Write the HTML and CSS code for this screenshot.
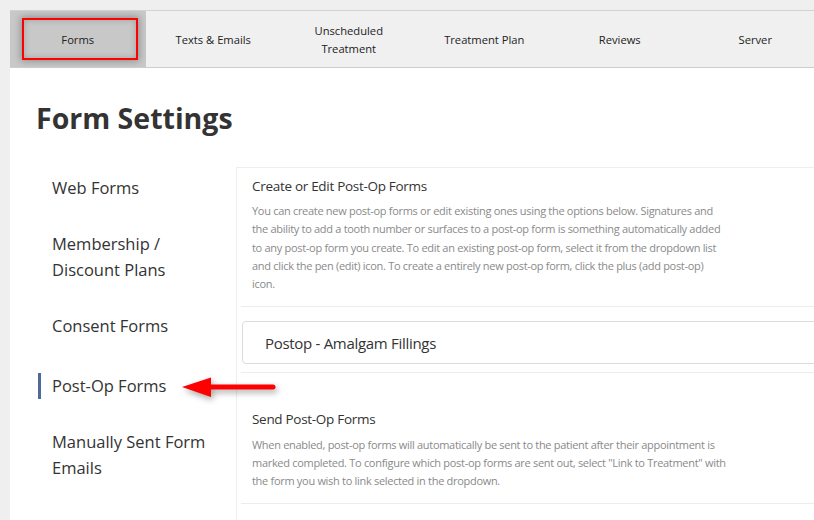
FILE: index.html
```html
<!DOCTYPE html>
<html lang="en">
<head>
<meta charset="UTF-8">
<meta name="viewport" content="width=device-width, initial-scale=1.0">
<title>Form Settings</title>
<link rel="stylesheet" href="styles.css">
</head>
<body>

<div class="page">
    <nav class="tabs">
        <div class="tab active">Forms</div>
        <div class="tab">Texts &amp; Emails</div>
        <div class="tab">Unscheduled<br>Treatment</div>
        <div class="tab">Treatment Plan</div>
        <div class="tab">Reviews</div>
        <div class="tab">Server</div>
    </nav>

    <div class="main">
        <h1>Form Settings</h1>

        <div class="layout">
            <ul class="side-nav">
                <li class="nav-item"><span class="label">Web Forms</span></li>
                <li class="nav-item"><span class="label">Membership /<br>Discount Plans</span></li>
                <li class="nav-item"><span class="label">Consent Forms</span></li>
                <li class="nav-item active"><span class="label">Post-Op Forms</span></li>
                <li class="nav-item"><span class="label">Manually Sent Form<br>Emails</span></li>
            </ul>

            <div class="panel">
                <section class="setting">
                    <h3>Create or Edit Post-Op Forms</h3>
                    <p>You can create new post-op forms or edit existing ones using the options below. Signatures and the ability to add a tooth number or surfaces to a post-op form is something automatically added to any post-op form you create. To edit an existing post-op form, select it from the dropdown list and click the pen (edit) icon. To create a entirely new post-op form, click the plus (add post-op) icon.</p>
                </section>
                <hr>
                <div class="select-box">Postop - Amalgam Fillings</div>
                <hr>
                <section class="setting second">
                    <h3>Send Post-Op Forms</h3>
                    <p>When enabled, post-op forms will automatically be sent to the patient after their appointment is marked completed. To configure which post-op forms are sent out, select "Link to Treatment" with the form you wish to link selected in the dropdown.</p>
                </section>
                <hr>
            </div>
        </div>
    </div>
</div>

<!-- callouts drawn over the page -->
<div class="callout-box"></div>
<svg class="callout-arrow" width="104" height="32" viewBox="0 0 104 32">
    <line x1="30" y1="15" x2="97" y2="15" stroke="#f00" stroke-width="5" stroke-linecap="round"/>
    <polygon points="6,15 35,5.5 35,25" fill="#f00"/>
</svg>

</body>
</html>
```

FILE: styles.css
```css
body {
    font-family: "Open Sans", "Noto Sans", sans-serif;
    background-color: #efefef;
    margin: 0;
    padding: 0;
    overflow: hidden;
    width: 814px;
    height: 520px;
}

.page {
    margin-left: 10px;
    padding-top: 10px;
    height: 510px;
    overflow: hidden;
}

.tabs {
    display: flex;
    background-color: #f0f0f0;
    border-top: 1px solid #d2d2d2;
    border-bottom: 1px solid #cdcdcd;
    height: 56px;
    width: 1000px;
}

.tab {
    flex: 0 0 135.5px;
    display: flex;
    align-items: center;
    justify-content: center;
    padding-top: 2px;
    box-sizing: border-box;
    text-align: center;
    font-size: 11.2px;
    line-height: 18px;
    color: #222;
}

.tab.active {
    background-color: #c8c8c8;
}

.main {
    background-color: #fff;
    height: 460px;
    width: 1000px;
}

h1 {
    margin: 0;
    padding: 30px 0 0 26px;
    font-size: 28.5px;
    line-height: 40px;
    font-weight: 700;
    color: #333;
}

.layout {
    display: grid;
    grid-template-columns: 226px 1fr;
    margin-top: 22px;
}

.side-nav {
    list-style: none;
    margin: 0;
    padding: 0 0 0 42px;
}

.nav-item {
    padding: 15px 0;
    font-size: 16.5px;
    line-height: 26px;
    color: #333;
}

.nav-item.active {
    padding: 19px 0 15px;
}

.nav-item.active .label {
    display: inline-block;
    border-left: 3px solid #4d6a98;
    padding-left: 11px;
    margin-left: -14px;
}

.panel {
    margin-top: 7px;
    border-top: 1px solid #eee;
    border-left: 1px solid #eee;
    height: 400px;
}

.setting {
    padding: 8px 0 13px 15px;
}

.setting.second {
    padding-top: 36px;
    padding-bottom: 13px;
}

.setting h3 {
    margin: 0 0 6px;
    font-size: 13.5px;
    letter-spacing: -0.3px;
    line-height: 20px;
    font-weight: 400;
    color: #333;
}

.setting p {
    margin: 0;
    width: 471px;
    font-size: 11px;
    letter-spacing: -0.3px;
    line-height: 18.3px;
    color: #8a8a8a;
}

.setting.second h3 {
    margin-bottom: 7px;
}

.setting.second p {
    width: 478px;
    line-height: 18px;
}

hr {
    margin: 0 0 0 4px;
    border: none;
    border-top: 1px solid #ececec;
}

.select-box {
    margin: 14px 0 8px 5px;
    height: 43px;
    box-sizing: border-box;
    border: 1px solid #dcdcdc;
    border-radius: 4px;
    padding-left: 22px;
    display: flex;
    align-items: center;
    font-size: 15px;
    letter-spacing: -0.3px;
    color: #333;
}

.callout-box {
    position: absolute;
    left: 22px;
    top: 18px;
    width: 116px;
    height: 42px;
    box-sizing: border-box;
    border: 2px solid #f00;
    box-shadow: 0 0 7px 1px rgba(0, 0, 0, 0.3), inset 0 0 6px rgba(0, 0, 0, 0.2);
}

.callout-arrow {
    position: absolute;
    left: 176px;
    top: 372px;
    filter: drop-shadow(2px 3px 3px rgba(0, 0, 0, 0.35));
}
```
